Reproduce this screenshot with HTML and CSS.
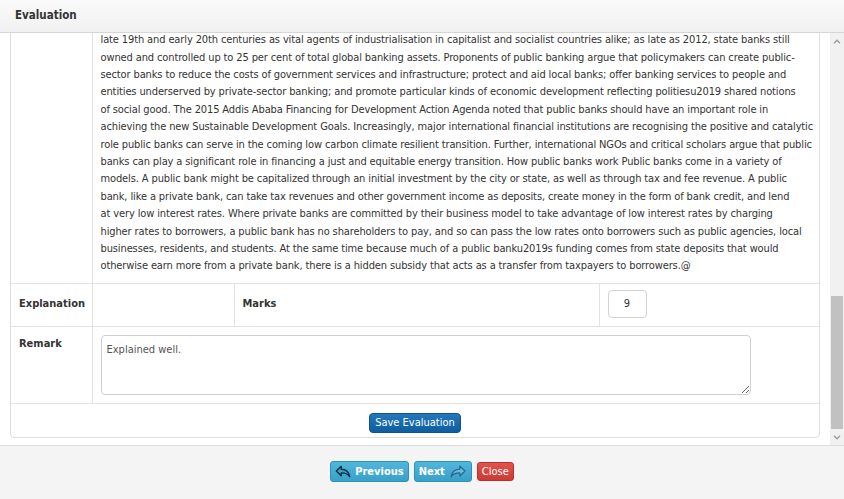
FILE: index.html
```html
<!DOCTYPE html>
<html lang="en">
<head>
  <meta charset="UTF-8">
  <meta name="viewport" content="width=device-width, initial-scale=1.0">
  <title>Evaluation</title>
  <link rel="stylesheet" href="styles.css">
</head>
<body>
  <div class="modal">
    <div class="modal-header">
      <h4>Evaluation</h4>
    </div>
    <div class="modal-body">
      <div class="scroll-area" id="scroll-area">
        <div class="panel">
          <table class="eval-table">
            <colgroup>
              <col class="col-1">
              <col class="col-2">
              <col class="col-3">
              <col>
            </colgroup>
            <tr>
              <th>Student</th>
              <td>STU-2041</td>
              <th>Question No.</th>
              <td>4</td>
            </tr>
            <tr>
              <th>Question</th>
              <td colspan="3">What are public banks? Explain how public banks work and describe the role they can play in financing development, infrastructure and a just energy transition.</td>
            </tr>
            <tr>
              <th>Max Marks</th>
              <td>10</td>
              <th>Word Limit</th>
              <td>500</td>
            </tr>
            <tr>
              <th>Answer</th>
              <td colspan="3" class="answer">
                <p>What are public banks? Public banks are financial institutions that are owned or controlled by the public sector, whether by a national, regional or municipal government, or by a group of governments acting together. They take many forms, including central banks, development banks, savings banks, postal banks, cooperative banks and green investment banks. Unlike private banks, which are owned by shareholders who expect profits to be maximised, public banks are accountable to public authorities and are usually given a mandate that reflects public policy goals. Public banks hold deposits, make loans and provide payment services just as private banks do, but the direction of their lending can be steered towards sectors that markets tend to neglect, such as affordable housing, small farmers, local enterprises, water and sanitation, public transport and renewable energy. Because they are not driven by the need to deliver short-term returns to investors, public banks are able to take a longer view and to offer patient capital at lower cost. They can continue to lend during a downturn, when private lenders pull back, and so help to stabilise the economy. This counter-cyclical role was seen clearly during the global financial crisis of 2008, when public development banks in many countries expanded their lending while private credit dried up. Public banks also have a long history. Municipal savings banks were founded in Europe in the eighteenth and nineteenth centuries to give ordinary households a safe place to keep their savings, and many of them still exist today. National development banks were created in the decades after the Second World War to finance reconstruction, industry and infrastructure, and regional and multilateral development banks followed. Today there are more than nine hundred public banks around the world, with combined assets of close to fifty trillion US dollars, and together they account for a substantial share of all investment in many economies. Public banks have been instrumental in the economic history of many countries, and historians have described their role during the</p>
                <p class="answer-tail">late 19th and early 20th centuries as vital agents of industrialisation in capitalist and socialist countries alike; as late as 2012, state banks still<br>
owned and controlled up to 25 per cent of total global banking assets. Proponents of public banking argue that policymakers can create public-<br>
sector banks to reduce the costs of government services and infrastructure; protect and aid local banks; offer banking services to people and<br>
entities underserved by private-sector banking; and promote particular kinds of economic development reflecting politiesu2019 shared notions<br>
of social good. The 2015 Addis Ababa Financing for Development Action Agenda noted that public banks should have an important role in<br>
achieving the new Sustainable Development Goals. Increasingly, major international financial institutions are recognising the positive and catalytic<br>
role public banks can serve in the coming low carbon climate resilient transition. Further, international NGOs and critical scholars argue that public<br>
banks can play a significant role in financing a just and equitable energy transition. How public banks work Public banks come in a variety of<br>
models. A public bank might be capitalized through an initial investment by the city or state, as well as through tax and fee revenue. A public<br>
bank, like a private bank, can take tax revenues and other government income as deposits, create money in the form of bank credit, and lend<br>
at very low interest rates. Where private banks are committed by their business model to take advantage of low interest rates by charging<br>
higher rates to borrowers, a public bank has no shareholders to pay, and so can pass the low rates onto borrowers such as public agencies, local<br>
businesses, residents, and students. At the same time because much of a public banku2019s funding comes from state deposits that would<br>
otherwise earn more from a private bank, there is a hidden subsidy that acts as a transfer from taxpayers to borrowers.@</p>
              </td>
            </tr>
            <tr class="marks-row">
              <th>Explanation</th>
              <td></td>
              <th>Marks</th>
              <td><input type="text" class="marks-input" value="9"></td>
            </tr>
            <tr class="remark-row">
              <th>Remark</th>
              <td colspan="3"><textarea class="remark-input">Explained well.</textarea></td>
            </tr>
            <tr>
              <td colspan="4" class="save-cell">
                <button class="btn btn-save">Save Evaluation</button>
              </td>
            </tr>
          </table>
        </div>
      </div>
      <div class="scrollbar">
        <div class="scroll-btn">
          <svg viewBox="0 0 8 5" width="8" height="5"><path d="M1 4.2 L4 1.2 L7 4.2" fill="none" stroke="#9a9a9a" stroke-width="1.3"/></svg>
        </div>
        <div class="scroll-track">
          <div class="scroll-thumb"></div>
        </div>
        <div class="scroll-btn">
          <svg viewBox="0 0 8 5" width="8" height="5"><path d="M1 0.8 L4 3.8 L7 0.8" fill="none" stroke="#9a9a9a" stroke-width="1.3"/></svg>
        </div>
      </div>
    </div>
    <div class="modal-footer">
      <button class="btn btn-info">
        <svg class="icon" viewBox="0 0 18 14" width="16" height="13"><path d="M7 1.2 L1.5 6.5 L7 11.8 L7 8.6 C11 8.4 14.2 9.6 16.5 12.8 C15.8 7.8 12.4 4.6 7 4.4 Z" fill="#3aa3cb" stroke="#12313f" stroke-width="1.6" stroke-linejoin="round"/></svg>
        Previous
      </button>
      <button class="btn btn-info">
        Next
        <svg class="icon" viewBox="0 0 18 14" width="18" height="13"><path d="M11 1.2 L16.5 6.5 L11 11.8 L11 8.6 C7 8.4 3.8 9.6 1.5 12.8 C2.2 7.8 5.6 4.6 11 4.4 Z" fill="#5cc0e2" stroke="#2b6585" stroke-width="1.3" stroke-linejoin="round"/></svg>
      </button>
      <button class="btn btn-danger">Close</button>
    </div>
  </div>
  <script type="text/javascript">
    const scrollArea = document.getElementById('scroll-area');
    scrollArea.scrollTop = scrollArea.scrollHeight;
  </script>
</body>
</html>
```

FILE: styles.css
```css
body {
  font-family: "DejaVu Sans Condensed", "DejaVu Sans", sans-serif;
  font-stretch: condensed;
  font-size: 11px;
  line-height: 17.4px;
  color: #333;
  margin: 0;
  background-color: #fff;
}
.modal {
  display: flex;
  flex-direction: column;
  height: 100vh;
}
.modal-header {
  height: 33px;
  box-sizing: border-box;
  display: flex;
  align-items: center;
  padding: 0 15px;
  background: linear-gradient(#fafafa, #f1f1f1);
  border-bottom: 1px solid #d6d6d6;
}
h4 {
  margin: 0;
  font-size: 11.5px;
  font-weight: bold;
}
.modal-body {
  flex: 1;
  display: flex;
  min-height: 0;
}
.scroll-area {
  flex: 1;
  overflow: hidden;
  padding: 0 10px 7px 10px;
}
.scrollbar {
  width: 14px;
  display: flex;
  flex-direction: column;
  background-color: #f1f1f1;
}
.scroll-btn {
  height: 16px;
  display: flex;
  align-items: center;
  justify-content: center;
}
.scroll-track {
  flex: 1;
  display: flex;
  flex-direction: column;
  justify-content: flex-end;
}
.scroll-thumb {
  height: 133px;
  margin: 0 1px;
  background-color: #c1c1c1;
}
.panel {
  border: 1px solid #dedede;
  border-radius: 4px;
  overflow: hidden;
}
.eval-table {
  width: 100%;
  table-layout: fixed;
  border-collapse: collapse;
}
.col-1 {
  width: 81px;
}
.col-2 {
  width: 142px;
}
.col-3 {
  width: 365px;
}
.eval-table th,
.eval-table td {
  padding: 8px;
  border: 1px solid #e3e3e3;
  text-align: left;
  vertical-align: top;
}
.eval-table tr:first-child th,
.eval-table tr:first-child td {
  border-top: none;
}
.eval-table tr:last-child td {
  border-bottom: none;
}
.eval-table th:first-child,
.eval-table td:first-child {
  border-left: none;
}
.eval-table th:last-child,
.eval-table td:last-child {
  border-right: none;
}
.eval-table th {
  font-weight: bold;
}
.answer p {
  margin: 0;
}
.answer .answer-tail {
  white-space: nowrap;
  letter-spacing: -0.12px;
}
.eval-table .marks-row th,
.eval-table .marks-row td {
  padding-top: 6px;
  vertical-align: middle;
}
.marks-input {
  display: block;
  width: 39px;
  height: 28px;
  box-sizing: border-box;
  border: 1px solid #d2d2d2;
  border-radius: 4px;
  text-align: center;
  font-family: inherit;
  font-size: 11px;
  color: #333;
}
.remark-input {
  display: block;
  width: 650px;
  height: 60px;
  box-sizing: border-box;
  padding: 5px 5px;
  border: 1px solid #cfcfcf;
  border-radius: 4px;
  font-family: inherit;
  font-size: 11px;
  line-height: 17px;
  color: #555;
  resize: vertical;
}
.eval-table .save-cell {
  text-align: center;
  padding: 9px 8px 4px 8px;
}
.btn {
  font-family: inherit;
  font-size: 11px;
  color: #fff;
  cursor: pointer;
  border-radius: 3px;
  display: inline-flex;
  align-items: center;
  gap: 4px;
  vertical-align: middle;
}
.btn-save {
  height: 20px;
  padding: 0 5px;
  border: 1px solid #0e5288;
  border-radius: 4px;
  background: linear-gradient(#2277bb, #0f5e9e);
}
.modal-footer {
  height: 54px;
  display: flex;
  justify-content: center;
  align-items: flex-start;
  gap: 5px;
  padding-top: 15px;
  box-sizing: border-box;
  background-color: #f4f4f4;
  border-top: 1px solid #dcdcdc;
}
.btn-info {
  height: 21px;
  padding: 0 4px;
  font-weight: bold;
  border: 1px solid #2a93bb;
  background: linear-gradient(#52b6dc, #3aa0c8);
}
.btn-danger {
  height: 19px;
  margin-top: 1px;
  padding: 0 4px;
  border: 1px solid #b9302c;
  background: linear-gradient(#df5450, #cc3a35);
}
.icon {
  display: block;
}
```
